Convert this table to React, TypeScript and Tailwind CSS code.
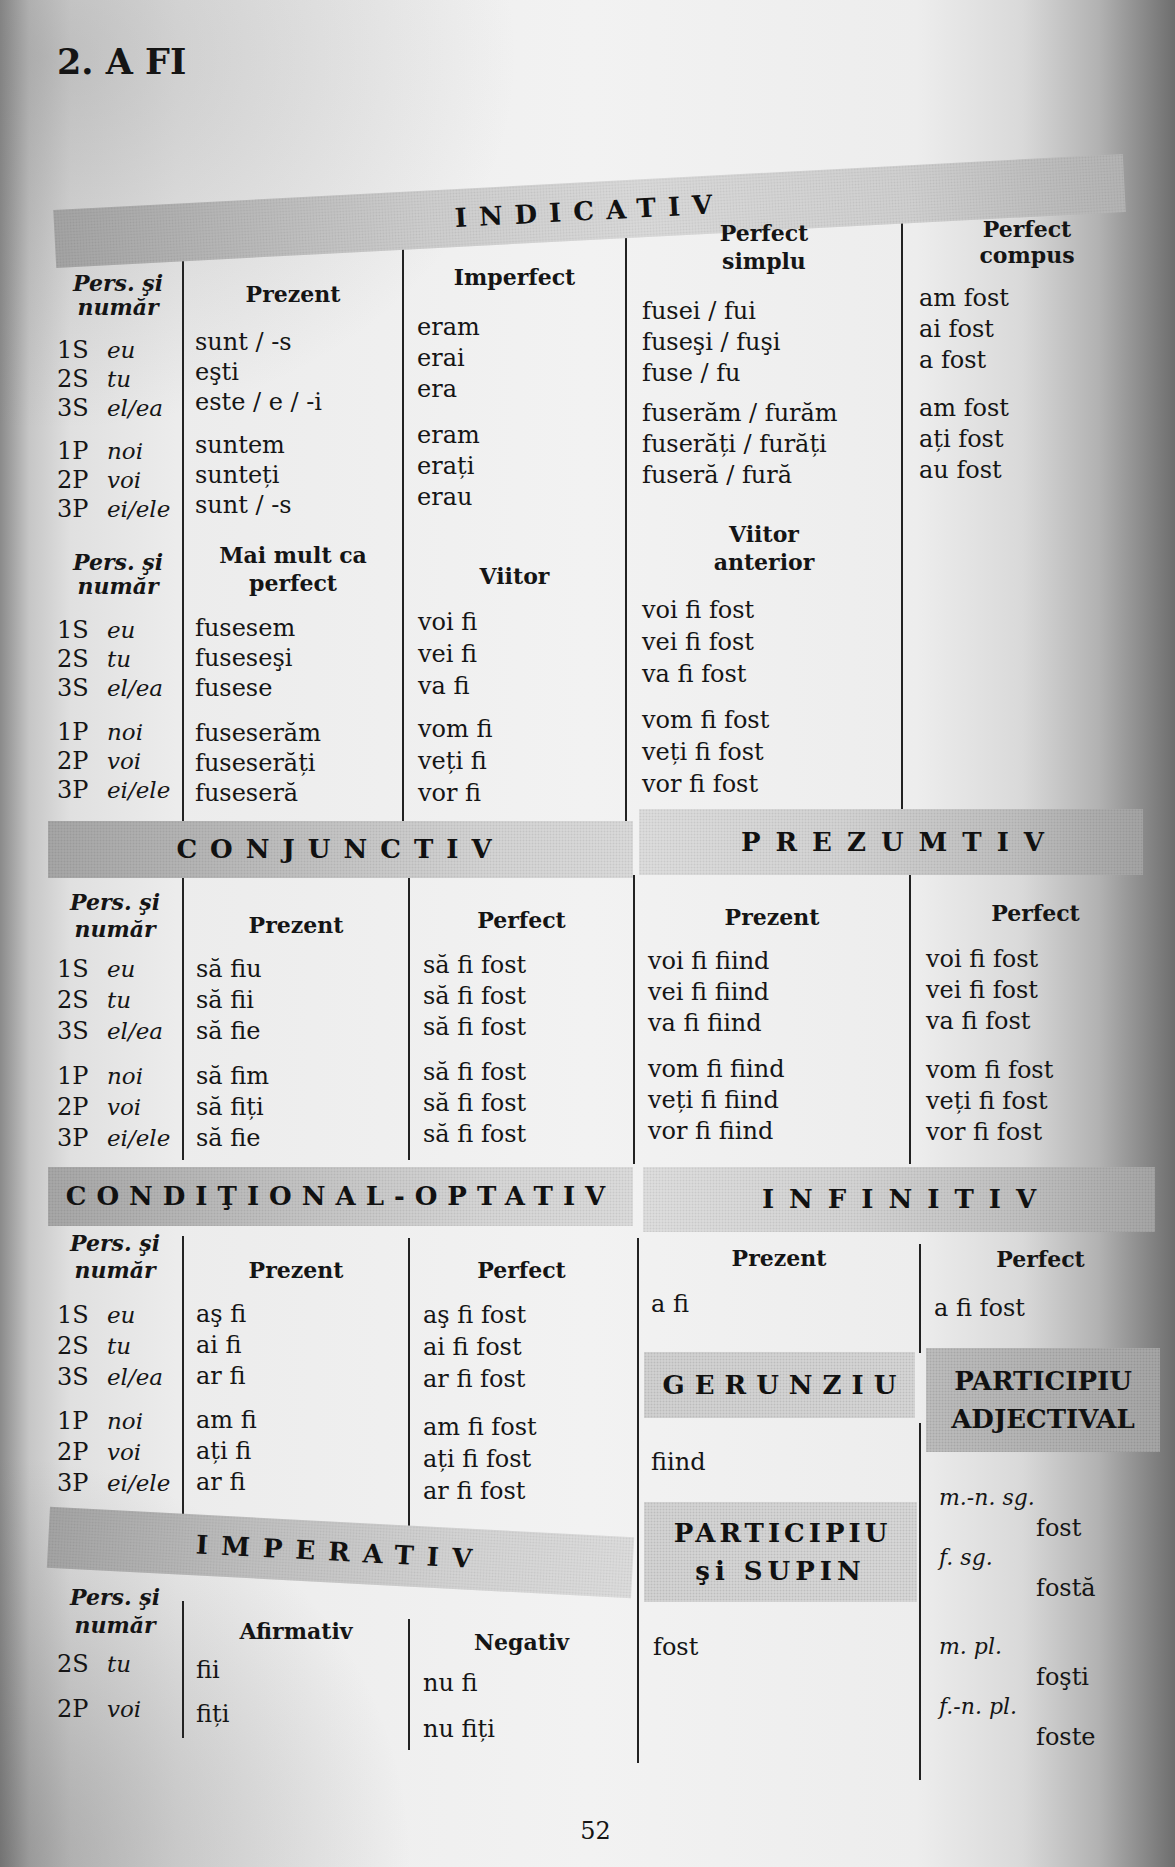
import type { ReactNode } from "react";

function Band({ className, children }: { className: string; children: ReactNode }) {
  return (
    <div
      className={`relative z-10 flex flex-col items-center justify-center text-[26px] font-bold text-[#111] bg-[length:3px_3px,100%_100%] ${className}`}
    >
      {children}
    </div>
  );
}

function Hd({ className = "", children }: { className?: string; children: ReactNode }) {
  return <div className={`relative z-20 text-center text-[22px] font-bold ${className}`}>{children}</div>;
}

function PersHead({ className = "" }: { className?: string }) {
  return (
    <div className={`relative z-20 text-center text-[22px] font-bold italic ${className}`}>
      <div>Pers. şi</div>
      <div>număr</div>
    </div>
  );
}

function P({ n, p }: { n: string; p: string }) {
  return (
    <div className="relative z-20 flex whitespace-nowrap">
      <span className="w-[50px] text-[24px]">{n}</span>
      <span className="text-[23px] italic">{p}</span>
    </div>
  );
}

function L({ children }: { children: ReactNode }) {
  return <div className="relative z-20 whitespace-nowrap text-[24px]">{children}</div>;
}

export default function App() {
  return (
    <div className="relative h-[1867px] w-[1175px] overflow-hidden bg-[image:radial-gradient(ellipse_40%_20%_at_4%_3%,rgba(110,110,110,0.3),transparent),radial-gradient(ellipse_35%_22%_at_0%_100%,rgba(80,80,80,0.4),transparent),linear-gradient(to_right,#8a8a8a_0%,#c6c6c6_2.5%,#e0e0e0_6%,#ececec_15%,#f2f2f2_50%,#ededed_78%,#d9d9d9_87%,#b2b2b2_93.5%,#6e6e6e_100%)] font-['DejaVu_Serif','Liberation_Serif',serif] text-[#151515]">
      {/* title */}
      <div className="h-[182px] pl-[57px] pt-[40px]">
        <h1 className="text-[35px] font-bold leading-[44px]">2. A FI</h1>
      </div>

      {/* INDICATIV */}
      <Band className="ml-[54px] h-[58px] w-[1071px] -rotate-[3deg] bg-[image:radial-gradient(rgba(0,0,0,0.08)_0.8px,transparent_1.1px),linear-gradient(to_right,#a3a3a3,#cdcdcd_35%,#d9d9d9_55%,#cfcfcf_80%,#b3b3b3)]">
        <span className="tracking-[12px]">INDICATIV</span>
      </Band>
      <div className="-mt-[26px] ml-[54px] grid h-[607px] grid-cols-[128px_220px_223px_276px_250px]">
        <div className="pt-[57px]">
          <PersHead className="leading-[24px]" />
          <div className="mt-[17px] pl-[3px] leading-[29px]">
            <P n="1S" p="eu" />
            <P n="2S" p="tu" />
            <P n="3S" p="el/ea" />
          </div>
          <div className="mt-[14px] pl-[3px] leading-[29px]">
            <P n="1P" p="noi" />
            <P n="2P" p="voi" />
            <P n="3P" p="ei/ele" />
          </div>
          <PersHead className="mt-[26px] leading-[24px]" />
          <div className="mt-[18px] pl-[3px] leading-[29px]">
            <P n="1S" p="eu" />
            <P n="2S" p="tu" />
            <P n="3S" p="el/ea" />
          </div>
          <div className="mt-[15px] pl-[3px] leading-[29px]">
            <P n="1P" p="noi" />
            <P n="2P" p="voi" />
            <P n="3P" p="ei/ele" />
          </div>
        </div>

        <div className="border-l-2 border-[#222] pt-[67px]">
          <Hd className="leading-[26px]">Prezent</Hd>
          <div className="mt-[20px] pl-[11px] leading-[30px]">
            <L>sunt / -s</L>
            <L>eşti</L>
            <L>este / e / -i</L>
          </div>
          <div className="mt-[13px] pl-[11px] leading-[30px]">
            <L>suntem</L>
            <L>sunteți</L>
            <L>sunt / -s</L>
          </div>
          <Hd className="mt-[21px] leading-[28px]">
            <div>Mai mult ca</div>
            <div>perfect</div>
          </Hd>
          <div className="mt-[16px] pl-[11px] leading-[30px]">
            <L>fusesem</L>
            <L>fuseseşi</L>
            <L>fusese</L>
          </div>
          <div className="mt-[15px] pl-[11px] leading-[30px]">
            <L>fuseserăm</L>
            <L>fuseserăți</L>
            <L>fuseseră</L>
          </div>
        </div>

        <div className="border-l-2 border-[#222] pt-[50px]">
          <Hd className="leading-[26px]">Imperfect</Hd>
          <div className="mt-[22px] pl-[13px] leading-[31px]">
            <L>eram</L>
            <L>erai</L>
            <L>era</L>
          </div>
          <div className="mt-[15px] pl-[13px] leading-[31px]">
            <L>eram</L>
            <L>erați</L>
            <L>erau</L>
          </div>
          <Hd className="mt-[50px] leading-[26px]">Viitor</Hd>
          <div className="mt-[17px] pl-[14px] leading-[32px]">
            <L>voi fi</L>
            <L>vei fi</L>
            <L>va fi</L>
          </div>
          <div className="mt-[11px] pl-[14px] leading-[32px]">
            <L>vom fi</L>
            <L>veți fi</L>
            <L>vor fi</L>
          </div>
        </div>

        <div className="border-l-2 border-[#222] pt-[5px]">
          <Hd className="leading-[28px]">
            <div>Perfect</div>
            <div>simplu</div>
          </Hd>
          <div className="mt-[21px] pl-[15px] leading-[31px]">
            <L>fusei / fui</L>
            <L>fuseşi / fuşi</L>
            <L>fuse / fu</L>
          </div>
          <div className="mt-[9px] pl-[15px] leading-[31px]">
            <L>fuserăm / furăm</L>
            <L>fuserăți / furăți</L>
            <L>fuseră / fură</L>
          </div>
          <Hd className="mt-[29px] leading-[28px]">
            <div>Viitor</div>
            <div>anterior</div>
          </Hd>
          <div className="mt-[18px] pl-[15px] leading-[32px]">
            <L>voi fi fost</L>
            <L>vei fi fost</L>
            <L>va fi fost</L>
          </div>
          <div className="mt-[14px] pl-[15px] leading-[32px]">
            <L>vom fi fost</L>
            <L>veți fi fost</L>
            <L>vor fi fost</L>
          </div>
        </div>

        <div className="border-l-2 border-[#222] pt-[2px]">
          <Hd className="leading-[26px]">
            <div>Perfect</div>
            <div>compus</div>
          </Hd>
          <div className="mt-[15px] pl-[16px] leading-[31px]">
            <L>am fost</L>
            <L>ai fost</L>
            <L>a fost</L>
          </div>
          <div className="mt-[17px] pl-[16px] leading-[31px]">
            <L>am fost</L>
            <L>ați fost</L>
            <L>au fost</L>
          </div>
        </div>
      </div>

      <div className="flex">
        {/* left half */}
        <div className="ml-[48px] w-[585px]">
          <Band className="h-[57px] w-full bg-[image:radial-gradient(rgba(0,0,0,0.08)_0.8px,transparent_1.1px),linear-gradient(to_right,#a5a5a5,#bdbdbd_40%,#d3d3d3_75%,#d9d9d9)]">
            <span className="tracking-[13px]">CONJUNCTIV</span>
          </Band>
          <div className="grid h-[282px] grid-cols-[134px_226px_225px]">
            <div className="pt-[11px]">
              <PersHead className="leading-[27px]" />
              <div className="mt-[11px] pl-[9px] leading-[31px]">
                <P n="1S" p="eu" />
                <P n="2S" p="tu" />
                <P n="3S" p="el/ea" />
              </div>
              <div className="mt-[14px] pl-[9px] leading-[31px]">
                <P n="1P" p="noi" />
                <P n="2P" p="voi" />
                <P n="3P" p="ei/ele" />
              </div>
            </div>
            <div className="border-l-2 border-[#222] pt-[34px]">
              <Hd className="leading-[26px]">Prezent</Hd>
              <div className="mt-[16px] pl-[12px] leading-[31px]">
                <L>să fiu</L>
                <L>să fii</L>
                <L>să fie</L>
              </div>
              <div className="mt-[14px] pl-[12px] leading-[31px]">
                <L>să fim</L>
                <L>să fiți</L>
                <L>să fie</L>
              </div>
            </div>
            <div className="border-l-2 border-[#222] pt-[29px]">
              <Hd className="leading-[26px]">Perfect</Hd>
              <div className="mt-[17px] pl-[13px] leading-[31px]">
                <L>să fi fost</L>
                <L>să fi fost</L>
                <L>să fi fost</L>
              </div>
              <div className="mt-[14px] pl-[13px] leading-[31px]">
                <L>să fi fost</L>
                <L>să fi fost</L>
                <L>să fi fost</L>
              </div>
            </div>
          </div>

          <Band className="mt-[7px] h-[59px] w-full bg-[image:radial-gradient(rgba(0,0,0,0.08)_0.8px,transparent_1.1px),linear-gradient(to_right,#a6a6a6,#c0c0c0_40%,#d5d5d5_75%,#dadada)]">
            <span className="tracking-[10px]">CONDIŢIONAL-OPTATIV</span>
          </Band>
          <div className="grid h-[304px] grid-cols-[134px_226px_225px]">
            <div className="pt-[4px]">
              <PersHead className="leading-[27px]" />
              <div className="mt-[16px] pl-[9px] leading-[31px]">
                <P n="1S" p="eu" />
                <P n="2S" p="tu" />
                <P n="3S" p="el/ea" />
              </div>
              <div className="mt-[13px] pl-[9px] leading-[31px]">
                <P n="1P" p="noi" />
                <P n="2P" p="voi" />
                <P n="3P" p="ei/ele" />
              </div>
            </div>
            <div className="mt-[10px] border-l-2 border-[#222] pt-[21px]">
              <Hd className="leading-[26px]">Prezent</Hd>
              <div className="mt-[16px] pl-[12px] leading-[31px]">
                <L>aş fi</L>
                <L>ai fi</L>
                <L>ar fi</L>
              </div>
              <div className="mt-[13px] pl-[12px] leading-[31px]">
                <L>am fi</L>
                <L>ați fi</L>
                <L>ar fi</L>
              </div>
            </div>
            <div className="mt-[12px] border-l-2 border-[#222] pt-[19px]">
              <Hd className="leading-[26px]">Perfect</Hd>
              <div className="mt-[16px] pl-[13px] leading-[32px]">
                <L>aş fi fost</L>
                <L>ai fi fost</L>
                <L>ar fi fost</L>
              </div>
              <div className="mt-[16px] pl-[13px] leading-[32px]">
                <L>am fi fost</L>
                <L>ați fi fost</L>
                <L>ar fi fost</L>
              </div>
            </div>
          </div>

          <Band className="-mt-[8px] h-[61px] w-full rotate-[3deg] bg-[image:radial-gradient(rgba(0,0,0,0.08)_0.8px,transparent_1.1px),linear-gradient(to_right,#a3a3a3,#bfbfbf_35%,#d3d3d3_70%,#dcdcdc)]">
            <span className="tracking-[13px]">IMPERATIV</span>
          </Band>
          <div className="grid grid-cols-[134px_226px_225px] items-start">
            <div>
              <PersHead className="leading-[28px]" />
              <div className="mt-[10px] pl-[9px] leading-[30px]">
                <P n="2S" p="tu" />
              </div>
              <div className="mt-[15px] pl-[9px] leading-[30px]">
                <P n="2P" p="voi" />
              </div>
            </div>
            <div className="mt-[18px] h-[137px] border-l-2 border-[#222] pt-[17px]">
              <Hd className="leading-[26px]">Afirmativ</Hd>
              <div className="mt-[11px] pl-[12px] leading-[30px]">
                <L>fii</L>
              </div>
              <div className="mt-[14px] pl-[12px] leading-[30px]">
                <L>fiți</L>
              </div>
            </div>
            <div className="mt-[36px] h-[131px] border-l-2 border-[#222] pt-[10px]">
              <Hd className="leading-[26px]">Negativ</Hd>
              <div className="mt-[13px] pl-[13px] leading-[30px]">
                <L>nu fi</L>
              </div>
              <div className="mt-[16px] pl-[13px] leading-[30px]">
                <L>nu fiți</L>
              </div>
            </div>
          </div>
        </div>

        {/* right half */}
        <div className="-mt-[12px] w-[527px]">
          <Band className="ml-[6px] h-[66px] w-[504px] bg-[image:radial-gradient(rgba(0,0,0,0.08)_0.8px,transparent_1.1px),linear-gradient(to_right,#dcdcdc,#d2d2d2_40%,#bdbdbd_75%,#a2a2a2)]">
            <span className="pl-[18px] tracking-[15px]">PREZUMTIV</span>
          </Band>
          <div className="grid h-[289px] grid-cols-[276px_251px]">
            <div className="border-l-2 border-[#222] pt-[29px]">
              <Hd className="leading-[26px]">Prezent</Hd>
              <div className="mt-[16px] pl-[13px] leading-[31px]">
                <L>voi fi fiind</L>
                <L>vei fi fiind</L>
                <L>va fi fiind</L>
              </div>
              <div className="mt-[15px] pl-[13px] leading-[31px]">
                <L>vom fi fiind</L>
                <L>veți fi fiind</L>
                <L>vor fi fiind</L>
              </div>
            </div>
            <div className="border-l-2 border-[#222] pt-[25px]">
              <Hd className="leading-[26px]">Perfect</Hd>
              <div className="mt-[18px] pl-[15px] leading-[31px]">
                <L>voi fi fost</L>
                <L>vei fi fost</L>
                <L>va fi fost</L>
              </div>
              <div className="mt-[18px] pl-[15px] leading-[31px]">
                <L>vom fi fost</L>
                <L>veți fi fost</L>
                <L>vor fi fost</L>
              </div>
            </div>
          </div>

          <Band className="ml-[10px] mt-[3px] h-[65px] w-[512px] bg-[image:radial-gradient(rgba(0,0,0,0.08)_0.8px,transparent_1.1px),linear-gradient(to_right,#dddddd,#d3d3d3_40%,#bebebe_75%,#a4a4a4)]">
            <span className="pl-[15px] tracking-[15px]">INFINITIV</span>
          </Band>
          <div className="flex items-start">
            <div className="ml-[4px] mt-[6px] h-[525px] w-[282px] border-l-2 border-[#222] pt-[7px]">
              <Hd className="leading-[26px]">Prezent</Hd>
              <div className="mt-[18px] pl-[12px] leading-[30px]">
                <L>a fi</L>
              </div>
              <Band className="ml-[5px] mt-[33px] h-[66px] w-[271px] bg-[image:radial-gradient(rgba(0,0,0,0.1)_0.8px,transparent_1.1px),linear-gradient(to_right,#d0d0d0,#d4d4d4)]">
                <span className="pl-[10px] tracking-[10px]">GERUNZIU</span>
              </Band>
              <div className="mt-[29px] pl-[12px] leading-[30px]">
                <L>fiind</L>
              </div>
              <Band className="ml-[5px] mt-[25px] h-[100px] w-[273px] leading-[38px] bg-[image:radial-gradient(rgba(0,0,0,0.1)_0.8px,transparent_1.1px),linear-gradient(to_right,#d2d2d2,#d6d6d6)]">
                <span className="pl-[4px] tracking-[4px]">PARTICIPIU</span>
                <span className="tracking-[5px]">şi SUPIN</span>
              </Band>
              <div className="mt-[30px] pl-[14px] leading-[30px]">
                <L>fost</L>
              </div>
            </div>

            <div className="flex w-[241px] flex-col">
              <div className="mt-[12px] h-[109px] border-l-2 border-[#222] pt-[2px]">
                <Hd className="leading-[26px]">Perfect</Hd>
                <div className="mt-[21px] pl-[13px] leading-[30px]">
                  <L>a fi fost</L>
                </div>
              </div>
              <Band className="-mt-[5px] ml-[7px] h-[104px] w-[234px] leading-[38px] bg-[image:radial-gradient(rgba(0,0,0,0.1)_0.8px,transparent_1.1px),linear-gradient(to_right,#bcbcbc,#b0b0b0_60%,#a4a4a4)]">
                <span>PARTICIPIU</span>
                <span>ADJECTIVAL</span>
              </Band>
              <div className="-mt-[29px] h-[357px] border-l-2 border-[#222] pt-[60px] leading-[30px]">
                <div className="relative z-20 pl-[18px] text-[22px] italic">m.-n. sg.</div>
                <div className="relative z-20 pl-[115px] text-[24px]">fost</div>
                <div className="relative z-20 pl-[18px] text-[22px] italic">f. sg.</div>
                <div className="relative z-20 pl-[115px] text-[24px]">fostă</div>
                <div className="relative z-20 mt-[29px] pl-[18px] text-[22px] italic">m. pl.</div>
                <div className="relative z-20 pl-[115px] text-[24px]">foşti</div>
                <div className="relative z-20 pl-[18px] text-[22px] italic">f.-n. pl.</div>
                <div className="relative z-20 pl-[115px] text-[24px]">foste</div>
              </div>
            </div>
          </div>
        </div>
      </div>

      <div className="mt-[36px] pl-[16px] text-center text-[24px] leading-[30px]">52</div>
    </div>
  );
}
